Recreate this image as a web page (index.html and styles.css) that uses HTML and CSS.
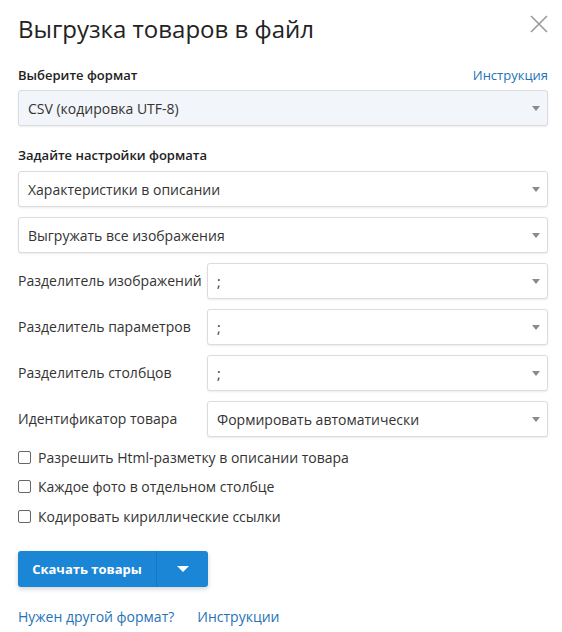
FILE: index.html
```html
<!DOCTYPE html>
<html lang="ru">
<head>
<meta charset="utf-8">
<link rel="stylesheet" href="styles.css">
</head>
<body>
<div class="dialog">
  <div class="header">
    <h1 class="title">Выгрузка товаров в файл</h1>
    <svg class="close" width="18" height="18" viewBox="0 0 18 18"><path d="M1 1L17 17M17 1L1 17" stroke="#9a9a9a" stroke-width="1.6" fill="none"/></svg>
  </div>
  <div class="label-row">
    <span class="label">Выберите формат</span>
    <a class="link" href="#">Инструкция</a>
  </div>
  <div class="select select-filled"><span>CSV (кодировка UTF-8)</span><i class="arrow"></i></div>

  <div class="label section">Задайте настройки формата</div>
  <div class="stack">
    <div class="select"><span>Характеристики в описании</span><i class="arrow"></i></div>
    <div class="select"><span>Выгружать все изображения</span><i class="arrow"></i></div>
    <div class="field"><span class="field-label">Разделитель изображений</span><div class="select"><span>;</span><i class="arrow"></i></div></div>
    <div class="field"><span class="field-label">Разделитель параметров</span><div class="select"><span>;</span><i class="arrow"></i></div></div>
    <div class="field"><span class="field-label">Разделитель столбцов</span><div class="select"><span>;</span><i class="arrow"></i></div></div>
    <div class="field"><span class="field-label">Идентификатор товара</span><div class="select"><span>Формировать автоматически</span><i class="arrow"></i></div></div>
  </div>

  <div class="checks">
    <label class="check"><span class="box"></span>Разрешить Html-разметку в описании товара</label>
    <label class="check"><span class="box"></span>Каждое фото в отдельном столбце</label>
    <label class="check"><span class="box"></span>Кодировать кириллические ссылки</label>
  </div>

  <div class="btn-group">
    <span class="btn-main">Скачать товары</span>
    <span class="btn-drop"><i class="arrow-white"></i></span>
  </div>

  <div class="footer-links">
    <a class="link" href="#">Нужен другой формат?</a>
    <a class="link" href="#">Инструкции</a>
  </div>
</div>
</body>
</html>
```

FILE: styles.css
```css
* { box-sizing: border-box; }
html, body { margin: 0; padding: 0; background: #fff; }
body {
  font-family: "Open Sans", "Noto Sans", sans-serif;
  font-size: 14px;
  color: #333;
}
.dialog {
  width: 562px;
  padding: 0 14px 0 18px;
}
.header {
  display: flex;
  justify-content: space-between;
  align-items: flex-start;
  height: 46px;
}
.title {
  margin: 12px 0 0;
  font-size: 24px;
  font-weight: 400;
  line-height: 34px;
  color: #222;
}
.close { margin-top: 15px; }
.label-row {
  display: flex;
  justify-content: space-between;
  align-items: baseline;
  margin-top: 19px;
  height: 20px;
}
.label {
  font-size: 13px;
  font-weight: 600;
  color: #222;
  line-height: 20px;
}
.link {
  color: #1f73b7;
  text-decoration: none;
  font-size: 13px;
}
.select {
  position: relative;
  height: 36px;
  border: 1px solid #dcdcdc;
  border-radius: 3px;
  box-shadow: 0 1px 2px rgba(0,0,0,0.08);
  background: #fff;
  display: flex;
  align-items: center;
  padding: 0 30px 0 9px;
  font-size: 14px;
  color: #333;
}
.select-filled {
  margin-top: 5px;
  background: #f2f5f9;
}
.arrow {
  position: absolute;
  right: 7px;
  top: 15px;
  width: 0;
  height: 0;
  border-left: 4px solid transparent;
  border-right: 4px solid transparent;
  border-top: 5px solid #8a8a8a;
}
.section {
  margin-top: 19px;
  display: block;
}
.stack {
  margin-top: 6px;
  display: flex;
  flex-direction: column;
  gap: 10px;
}
.field {
  display: grid;
  grid-template-columns: 189px 1fr;
  align-items: center;
}
.field-label {
  font-size: 14px;
  color: #333;
  margin-top: -2px;
}
.checks {
  margin-top: 10px;
  display: flex;
  flex-direction: column;
  gap: 9.5px;
}
.check {
  display: flex;
  align-items: center;
  height: 20px;
  font-size: 14px;
  color: #333;
}
.box {
  width: 13px;
  height: 13px;
  border: 1px solid #666;
  border-radius: 2px;
  margin-right: 7px;
  flex: none;
}
.btn-group {
  margin-top: 25px;
  display: inline-flex;
  height: 36px;
  border-radius: 3px;
  background: #1c86d6;
  box-shadow: 0 2px 5px rgba(0,0,0,0.18);
  overflow: hidden;
}
.btn-main {
  width: 139px;
  display: flex;
  align-items: center;
  justify-content: center;
  color: #fff;
  font-weight: 700;
  font-size: 13px;
  border-right: 1px solid #1877c2;
}
.btn-drop {
  width: 51px;
  display: flex;
  align-items: center;
  justify-content: center;
}
.arrow-white {
  width: 0;
  height: 0;
  border-left: 6px solid transparent;
  border-right: 6px solid transparent;
  border-top: 6px solid #fff;
}
.footer-links {
  margin-top: 20px;
  display: flex;
  gap: 23px;
}
.footer-links .link { font-size: 14px; }
```
